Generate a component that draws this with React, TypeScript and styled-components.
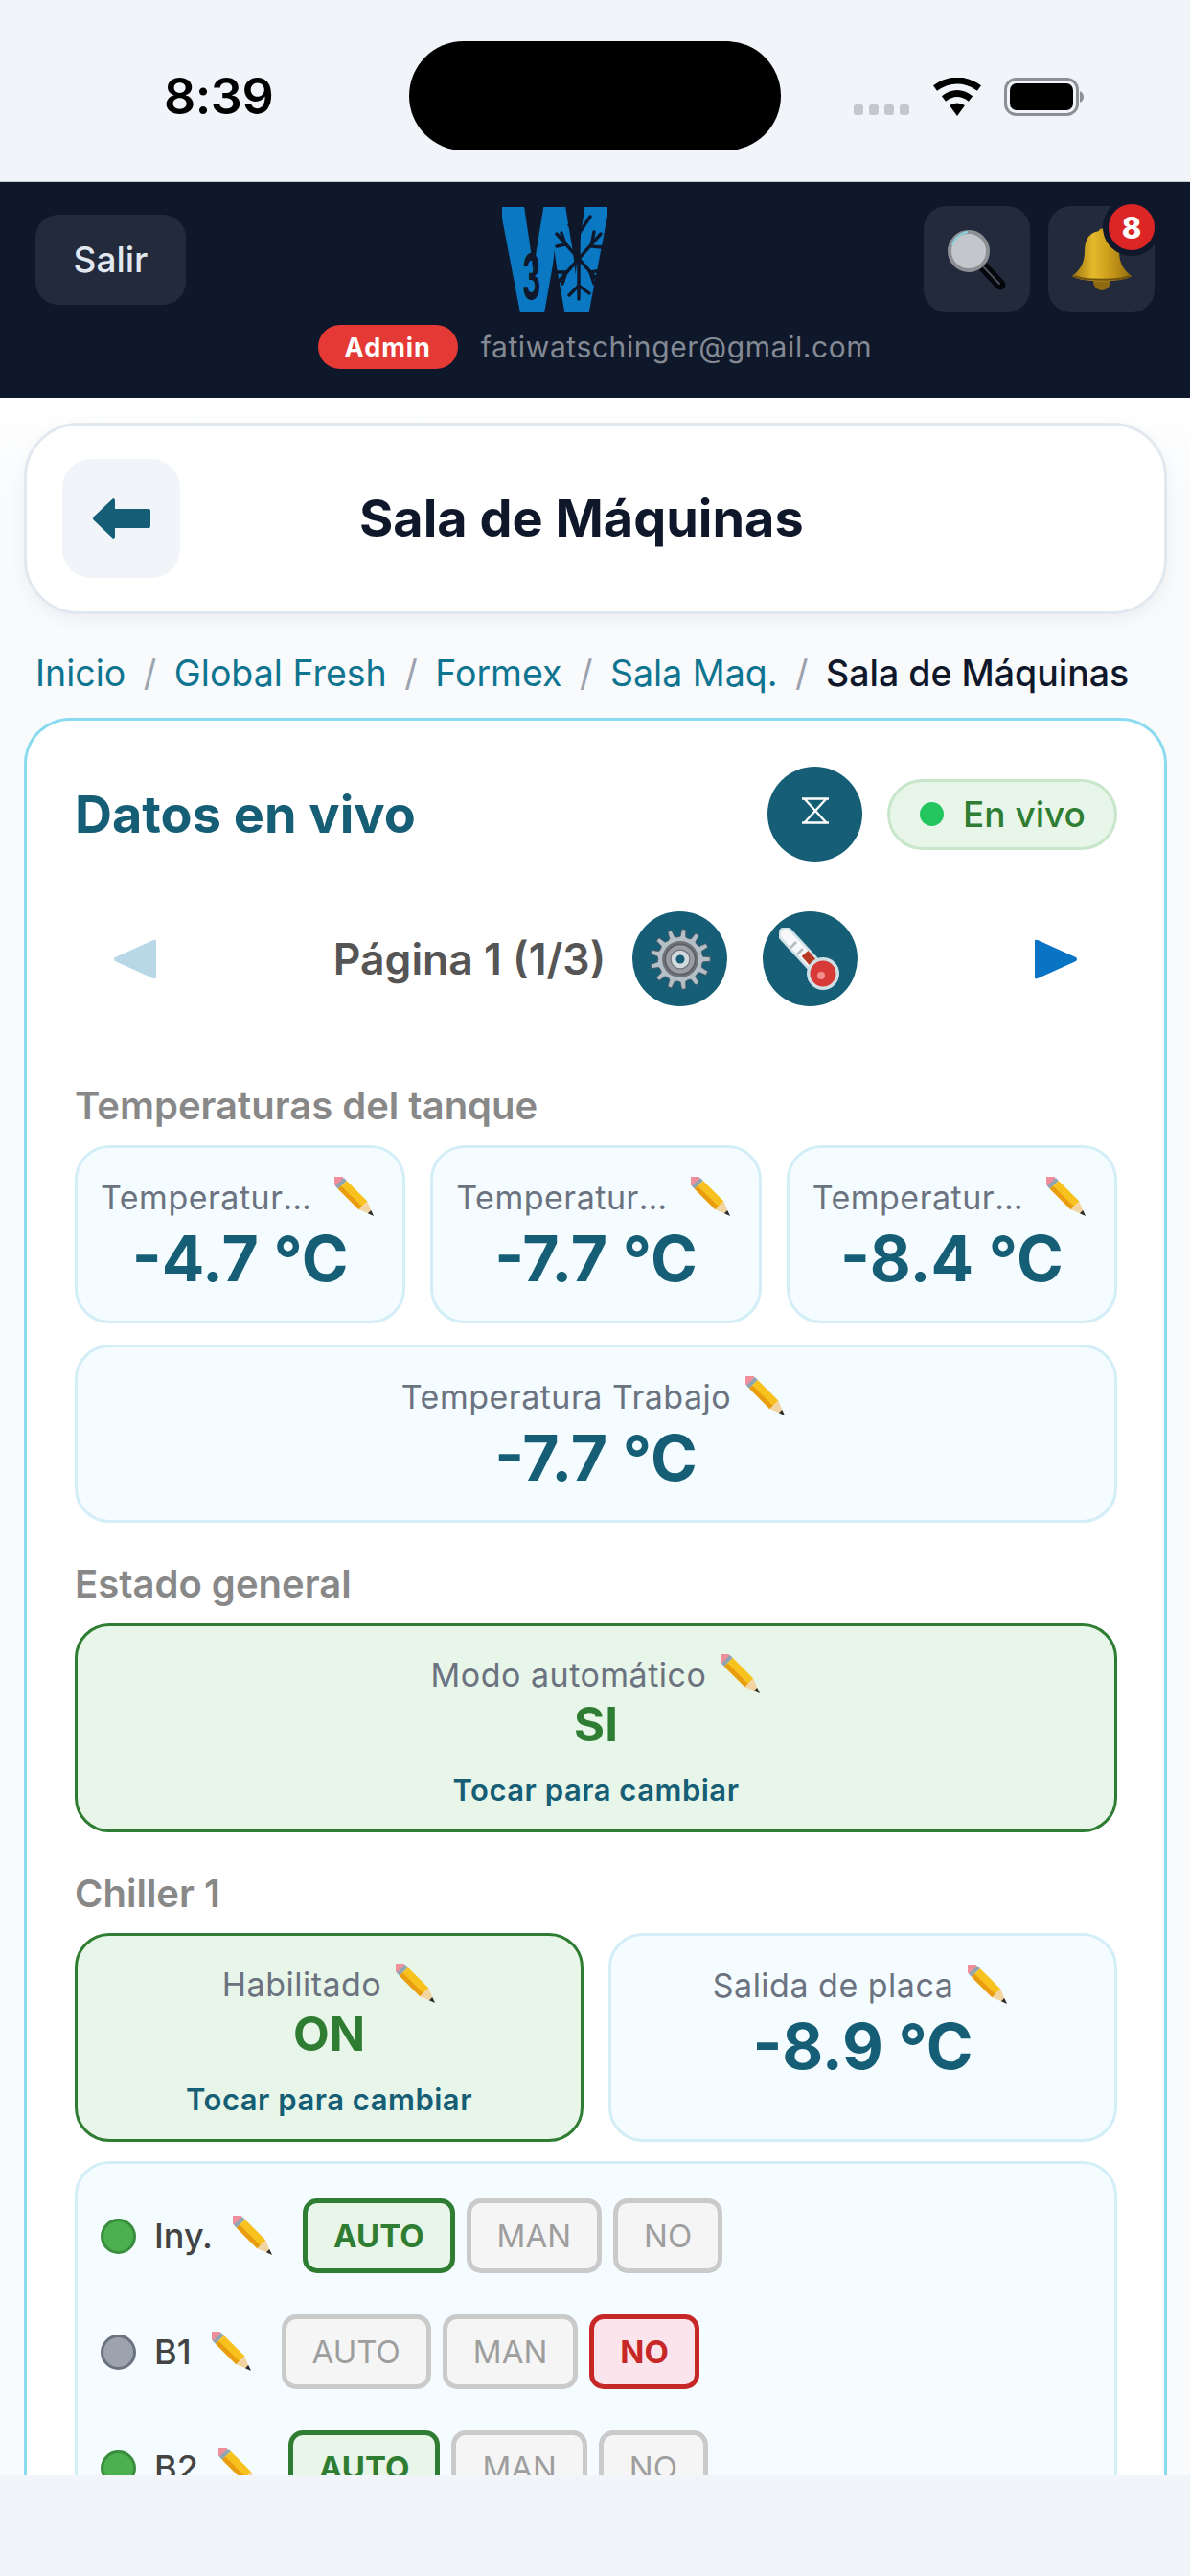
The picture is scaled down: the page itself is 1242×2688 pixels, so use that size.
import * as React from 'react';
import styled, { createGlobalStyle } from 'styled-components';

const GlobalStyles = createGlobalStyle`
  html, body {
    margin: 0;
    padding: 0;
    background: #f1f5f9;
    font-family: 'Inter', 'Liberation Sans', sans-serif;
  }

  *, *:before, *:after {
    box-sizing: border-box;
  }
`;

const TEAL = '#155e75';
const GREEN = '#2e7d32';
const RED = '#c62828';

const Screen = styled.div`
  display: flex;
  flex-direction: column;
  width: 1242px;
  height: 2688px;
  overflow: hidden;
  background: #f1f5f9;
`;

const StatusBar = styled.div`
  display: grid;
  grid-template-columns: 427px 388px 1fr;
  flex: none;
  height: 190px;
  padding-top: 43px;
  border-bottom: 1px solid #c9ccd1;
`;
const Time = styled.div`
  height: 114px;
  padding-left: 171px;
  color: #000;
  font-size: 52px;
  font-weight: 600;
  letter-spacing: -0.5px;
  line-height: 116px;
`;
const Island = styled.div`
  height: 114px;
  border-radius: 57px;
  background: #000;
`;
const StatusIcons = styled.div`
  display: flex;
  align-items: flex-end;
  height: 40px;
  margin-top: 38px;
  padding-left: 76px;
`;
const SignalDots = styled.div`
  display: flex;
  gap: 6px;
  margin: 0 24px 1px 0;
`;
const SignalDot = styled.span`
  width: 10px;
  height: 11px;
  border-radius: 3px;
  background: #c4c7cb;
`;

const Header = styled.header`
  display: flex;
  flex: none;
  flex-direction: column;
  gap: 13px;
  height: 225px;
  padding: 25px 37px 0;
  background: #0f172a;
`;
const HeaderTop = styled.div`
  display: flex;
  align-items: center;
  justify-content: space-between;
`;
const ExitButton = styled.div`
  display: flex;
  align-items: center;
  justify-content: center;
  width: 157px;
  height: 94px;
  border-radius: 24px;
  background: #222a3b;
  color: #e2e8f0;
  font-size: 37px;
  font-weight: 500;
`;
const HeaderActions = styled.div`
  display: flex;
  gap: 19px;
`;
const ActionButton = styled.div`
  position: relative;
  display: flex;
  align-items: center;
  justify-content: center;
  width: 111px;
  height: 111px;
  border-radius: 24px;
  background: #222a3b;
`;
const Badge = styled.span`
  position: absolute;
  top: -8px;
  right: -6px;
  display: flex;
  align-items: center;
  justify-content: center;
  width: 60px;
  height: 60px;
  border: 6px solid #0f172a;
  border-radius: 50%;
  background: #dc2626;
  color: #fff;
  font-size: 31px;
  font-weight: 800;
`;
const UserRow = styled.div`
  display: flex;
  align-items: center;
  justify-content: center;
  gap: 24px;
`;
const RolePill = styled.span`
  display: flex;
  align-items: center;
  justify-content: center;
  width: 146px;
  height: 46px;
  border-radius: 23px;
  background: #e53935;
  color: #fff;
  font-size: 27px;
  font-weight: 700;
  letter-spacing: 1px;
`;
const Email = styled.span`
  color: #848a94;
  font-size: 30px;
  letter-spacing: 0.6px;
`;

const Content = styled.main`
  flex: 1;
  min-height: 0;
  overflow: hidden;
  padding: 26px 24px 0 25px;
  background: linear-gradient(#ffffff, #f8fafc 120px);
`;
const TitleCard = styled.div`
  display: flex;
  align-items: center;
  height: 200px;
  padding-left: 37px;
  border: 3px solid #e2e8f0;
  border-radius: 57px;
  background: #fff;
  box-shadow: 0 6px 18px rgba(15, 23, 42, 0.05);
`;
const BackButton = styled.div`
  display: flex;
  flex: none;
  align-items: center;
  justify-content: center;
  width: 123px;
  height: 124px;
  border-radius: 30px;
  background: #f1f5f9;
`;
const PageTitle = styled.h1`
  margin: 0 0 0 187px;
  color: #0f172a;
  font-size: 54px;
  font-weight: 700;
  line-height: 64px;
`;
const Breadcrumbs = styled.nav`
  display: flex;
  align-items: center;
  gap: 18.5px;
  height: 46px;
  margin: 38px 0 0 12px;
  font-size: 37.5px;
  white-space: nowrap;
`;
const Crumb = styled.span<{ $current?: boolean }>`
  color: ${({ $current }) => ($current ? '#0f172a' : '#0e7490')};
  font-weight: ${({ $current }) => ($current ? 500 : 400)};
`;
const CrumbSeparator = styled.span`
  color: #9ca3af;
`;

const LiveCard = styled.section`
  margin-top: 24px;
  padding: 48px 49px 60px 50px;
  border: 3px solid #8adbef;
  border-bottom: 0;
  border-radius: 48px 48px 0 0;
  background: #fff;
`;
const LiveHeader = styled.div`
  display: flex;
  align-items: center;
  justify-content: space-between;
`;
const LiveTitle = styled.h2`
  margin: 0;
  color: ${TEAL};
  font-size: 54px;
  font-weight: 700;
`;
const LiveActions = styled.div`
  display: flex;
  align-items: center;
  gap: 26px;
`;
const RoundButton = styled.div`
  display: flex;
  flex: none;
  align-items: center;
  justify-content: center;
  width: 99px;
  height: 99px;
  border-radius: 50%;
  background: ${TEAL};

  & + & {
    margin-left: 9px;
  }
`;
const LivePill = styled.div`
  display: flex;
  align-items: center;
  gap: 20px;
  width: 240px;
  height: 74px;
  padding-left: 31px;
  border: 3px solid #c8e6c9;
  border-radius: 37px;
  background: #e8f5e9;
  color: ${GREEN};
  font-size: 37px;
  font-weight: 500;
`;
const LiveDot = styled.span`
  width: 25px;
  height: 25px;
  border-radius: 50%;
  background: #22c55e;
`;
const PagerRow = styled.div`
  display: flex;
  align-items: center;
  justify-content: space-between;
  margin-top: 52px;
  padding: 0 42px 0 41px;
`;
const PagerCenter = styled.div`
  display: flex;
  align-items: center;
  gap: 28px;
`;
const PagerLabel = styled.span`
  color: #555;
  font-size: 44.5px;
  font-weight: 600;
`;

const Section = styled.div<{ $first?: boolean }>`
  margin-top: ${({ $first }) => ($first ? 80 : 40)}px;
`;
const SectionTitle = styled.h3`
  margin: 0 0 18px;
  color: #888;
  font-size: 40px;
  font-weight: 600;
  line-height: 47px;
`;
const TripleGrid = styled.div`
  display: grid;
  grid-template-columns: repeat(3, 1fr);
  gap: 22px 26px;
`;
const DoubleGrid = styled.div`
  display: grid;
  grid-template-columns: repeat(2, 1fr);
  gap: 26px;
`;
const Card = styled.div<{ $wide?: boolean; $on?: boolean }>`
  grid-column: ${({ $wide }) => ($wide ? '1 / -1' : 'auto')};
  min-width: 0;
  padding: ${({ $on }) => ($on ? '30px 24px 21px' : '31px 29px 25px 24px')};
  border: 3px solid ${({ $on }) => ($on ? GREEN : '#d3eef6')};
  border-radius: 36px;
  background: ${({ $on }) => ($on ? '#e8f5e9' : '#f4fcff')};
`;
const LabelRow = styled.div`
  display: flex;
  align-items: center;
  justify-content: center;
  gap: 15px;
  height: 40px;
`;
const Label = styled.span`
  overflow: hidden;
  min-width: 0;
  color: #6b7280;
  font-size: 34px;
  letter-spacing: 0.5px;
  text-overflow: ellipsis;
  white-space: nowrap;
`;
const Value = styled.div`
  margin-top: 4px;
  margin-right: -5px;
  color: ${TEAL};
  font-size: 66px;
  font-weight: 700;
  line-height: 80px;
  text-align: center;
  white-space: nowrap;
`;
const StateValue = styled.div`
  margin-top: 3px;
  color: ${GREEN};
  font-size: 49px;
  font-weight: 700;
  line-height: 60px;
  text-align: center;
`;
const TapHint = styled.div`
  margin-top: 18px;
  color: ${TEAL};
  font-size: 31px;
  font-weight: 600;
  letter-spacing: 0.5px;
  line-height: 40px;
  text-align: center;
`;
const DevicesCard = styled.div`
  display: flex;
  flex-direction: column;
  gap: 43px;
  margin-top: 20px;
  padding: 36px 24px 36px;
  border: 3px solid #d3eef6;
  border-radius: 36px;
  background: #f4fcff;
`;
const DeviceRow = styled.div`
  display: flex;
  align-items: center;
  height: 78px;
`;
const DeviceDot = styled.span<{ $active: boolean }>`
  flex: none;
  width: 37px;
  height: 37px;
  border: 3px solid ${({ $active }) => ($active ? '#388e3c' : '#6b7280')};
  border-radius: 50%;
  background: ${({ $active }) => ($active ? '#4caf50' : '#9ca3af')};
`;
const DeviceName = styled.span`
  margin: 0 21px 0 19px;
  color: #444;
  font-size: 36px;
  font-weight: 500;
`;
const ModeGroup = styled.div`
  display: flex;
  gap: 12px;
  margin-left: 31px;
`;
const ModeButton = styled.div<{ $tone?: 'green' | 'red' }>`
  display: flex;
  align-items: center;
  justify-content: center;
  height: 78px;
  padding: 0 27px;
  border: 5px solid ${({ $tone }) => ($tone === 'green' ? GREEN : $tone === 'red' ? RED : '#cacaca')};
  border-radius: 15px;
  background: ${({ $tone }) => ($tone === 'green' ? '#e8f5e9' : $tone === 'red' ? '#fce4ec' : '#f5f5f5')};
  color: ${({ $tone }) => ($tone === 'green' ? GREEN : $tone === 'red' ? RED : '#9e9e9e')};
  font-size: 33px;
  font-weight: ${({ $tone }) => ($tone ? 700 : 400)};
`;
const BottomBar = styled.div`
  flex: none;
  height: 105px;
  background: #f1f5f9;
`;

const gearPoints = (() => {
  const pts: string[] = [];
  const teeth = 13;
  for (let i = 0; i < teeth; i++) {
    const a = (i / teeth) * Math.PI * 2;
    const w = (Math.PI * 2) / teeth;
    [
      [a - w * 0.5, 28],
      [a - w * 0.24, 29],
      [a - w * 0.14, 38],
      [a + w * 0.14, 38],
      [a + w * 0.24, 29],
    ].forEach(([t, r]) => pts.push(`${(40 + r * Math.cos(t)).toFixed(1)},${(40 + r * Math.sin(t)).toFixed(1)}`));
  }
  return pts.join(' ');
})();

const Wifi = () => (
  <svg width="52" height="40" viewBox="0 0 52 40" style={{ marginRight: 23 }}>
    <path d="M26 40 L18 29 Q26 24 34 29 Z" fill="#000" />
    <path d="M12 22 Q26 11 40 22" stroke="#000" strokeWidth="7" fill="none" />
    <path d="M3 11 Q26 -5 49 11" stroke="#000" strokeWidth="7" fill="none" />
  </svg>
);

const Battery = () => (
  <svg width="83" height="40" viewBox="0 0 83 40">
    <rect x="1.5" y="1.5" width="75" height="37" rx="11" fill="none" stroke="#8e8e93" strokeWidth="3" />
    <rect x="6" y="6" width="66" height="28" rx="7" fill="#000" />
    <path d="M79 14 Q83 16 83 20 Q83 24 79 26 Z" fill="#8e8e93" />
  </svg>
);

// logo: heavy W with a snowflake and a small 3 over it
const Logo = () => (
  <svg width="110" height="110" viewBox="0 0 110 110">
    <text
      x="0"
      y="0"
      transform="translate(-4 109) scale(0.92 1.27)"
      fontFamily="Inter, sans-serif"
      fontSize="118"
      fontWeight="900"
      stroke="#0a78c2"
      strokeWidth="1.5"
      fill="#0a78c2"
    >
      W
    </text>
    <text
      x="0"
      y="0"
      transform="translate(21 96) scale(0.6 1.3)"
      fontFamily="Inter, sans-serif"
      fontSize="50"
      fontWeight="700"
      fill="#0f172a"
    >
      3
    </text>
    <g stroke="#0f172a" strokeWidth="3.4" fill="none" strokeLinecap="round">
      <path d="M80 16 V96 M57 28 L103 80 M103 28 L57 80" />
      <path d="M70 19 L80 28 L92 10 M70 92 L80 82 L91 90" />
      <path d="M57 41 L66 39 L62 27 M96 26 L93 41 L105 42" />
      <path d="M56 68 L67 68 L63 80 M104 66 L92 68 L96 80" />
    </g>
  </svg>
);

const Magnifier = () => (
  <svg width="64" height="64" viewBox="0 0 64 64">
    <path d="M37 38 L56 58" stroke="#05070c" strokeWidth="11" strokeLinecap="round" />
    <path d="M38 39 L55 57" stroke="#4a4e57" strokeWidth="2" strokeLinecap="round" />
    <circle cx="23" cy="23" r="20" fill="#c3c6ca" stroke="#8c9095" strokeWidth="4" />
    <path d="M6 17 A19 19 0 0 1 22 3" stroke="#8fd0df" strokeWidth="2" fill="none" />
  </svg>
);

const Bell = () => (
  <svg width="66" height="66" viewBox="0 0 66 66">
    <defs>
      <linearGradient id="bellGold" x1="0" x2="1" y1="0" y2="0">
        <stop offset="0" stopColor="#9c7410" />
        <stop offset="0.35" stopColor="#e5b92c" />
        <stop offset="0.65" stopColor="#c99a1a" />
        <stop offset="1" stopColor="#8f6a0c" />
      </linearGradient>
    </defs>
    <circle cx="33" cy="4" r="3.5" fill="#c4951a" />
    <ellipse cx="33" cy="56" rx="9" ry="9" fill="#8f6a12" />
    <path
      d="M33 3 C21 3 15 11 15 24 C15 37 10 44 2 50 C10 57 56 57 64 50 C56 44 51 37 51 24 C51 11 45 3 33 3 Z"
      fill="url(#bellGold)"
    />
    <path d="M4 50 C14 55 52 55 62 50" stroke="#6f530f" strokeWidth="2" fill="none" />
  </svg>
);

const BackArrow = () => (
  <svg width="60" height="42" viewBox="0 0 60 42">
    <path d="M21 0 Q23 0 23 3 V11 H58 Q60 11 60 13 V29 Q60 31 58 31 H23 V39 Q23 42 21 42 L1 23 Q-1 21 1 19 Z" fill={TEAL} />
  </svg>
);

const Hourglass = () => (
  <svg width="30" height="28" viewBox="0 0 30 28" style={{ marginBottom: 8 }}>
    <path d="M1 1.5 H29 M1 26.5 H29 M4 2 L26 26 M26 2 L4 26" stroke="#fff" strokeWidth="2.4" fill="none" />
  </svg>
);

const Triangle = ({ dir, color }: { dir: 'left' | 'right'; color: string }) => (
  <svg width="44" height="42" viewBox="0 0 44 42">
    <path
      d={dir === 'left' ? 'M44 2 V40 Q44 42 41 41 L1 23 Q-1 21 1 19 L41 1 Q44 0 44 2 Z' : 'M0 2 V40 Q0 42 3 41 L43 23 Q45 21 43 19 L3 1 Q0 0 0 2 Z'}
      fill={color}
    />
  </svg>
);

const Gear = () => (
  <svg width="66" height="66" viewBox="0 0 80 80">
    <polygon points={gearPoints} fill="#b4bfc7" stroke="#4f555c" strokeWidth="1" />
    <circle cx="40" cy="40" r="23" fill="#6f7378" />
    <circle cx="40" cy="40" r="19" fill="#9a9da2" stroke="#5c6066" strokeWidth="2" />
    <circle cx="40" cy="40" r="12" fill="#d3dade" stroke="#70757a" strokeWidth="1.5" />
    <circle cx="40" cy="40" r="5.5" fill={TEAL} />
  </svg>
);

const Thermometer = () => (
  <svg width="66" height="66" viewBox="0 0 66 66">
    <path d="M7 7 L42 45" stroke="#cfe0e6" strokeWidth="16" strokeLinecap="round" />
    <path d="M7 7 L42 45" stroke="#f6f8f9" strokeWidth="11" strokeLinecap="round" />
    <path d="M12 21 L18 15 M19 28 L25 22" stroke="#b4bcc0" strokeWidth="2.5" />
    <path d="M27 27 L44 46" stroke="#b83a22" strokeWidth="9" />
    <circle cx="46" cy="48" r="17" fill="#cfe0e6" />
    <circle cx="46" cy="48" r="13.5" fill="#d83a38" />
    <circle cx="44" cy="50" r="4" fill="#f28f8f" />
  </svg>
);

const Pencil = () => (
  <svg width="42" height="42" viewBox="0 0 40 40" style={{ flex: 'none' }}>
    <g transform="rotate(45 20 20)">
      <rect x="-9" y="14" width="9" height="12" rx="3.5" fill="#ef8f9c" />
      <rect x="-1" y="14" width="4" height="12" fill="#8fa6b2" />
      <rect x="3" y="14" width="29" height="12" fill="#f7c21e" />
      <rect x="3" y="21.5" width="29" height="4.5" fill="#ea9c10" />
      <path d="M32 14 L46 20 L32 26 Z" fill="#f2d3a2" />
      <path d="M41 17.8 L47 20 L41 22.2 Z" fill="#2b2b2b" />
    </g>
  </svg>
);

type Mode = 'AUTO' | 'MAN' | 'NO';
const MODE_LIST: Mode[] = ['AUTO', 'MAN', 'NO'];

const DEVICES: { name: string; selected: Mode; active: boolean }[] = [
  { name: 'Iny.', selected: 'AUTO', active: true },
  { name: 'B1', selected: 'NO', active: false },
  { name: 'B2', selected: 'AUTO', active: true },
];

const LabelLine = ({ text }: { text: string }) => (
  <LabelRow>
    <Label>{text}</Label>
    <Pencil />
  </LabelRow>
);

const toneFor = (mode: Mode, selected: Mode): 'green' | 'red' | undefined => {
  if (mode !== selected) return undefined;
  return mode === 'NO' ? 'red' : 'green';
};

export default function App() {
  return (
    <React.Fragment>
      <GlobalStyles />
      <Screen>
        <StatusBar>
          <Time>8:39</Time>
          <Island />
          <StatusIcons>
            <SignalDots>
              <SignalDot />
              <SignalDot />
              <SignalDot />
              <SignalDot />
            </SignalDots>
            <Wifi />
            <Battery />
          </StatusIcons>
        </StatusBar>

        <Header>
          <HeaderTop>
            <ExitButton>Salir</ExitButton>
            <Logo />
            <HeaderActions>
              <ActionButton>
                <Magnifier />
              </ActionButton>
              <ActionButton>
                <Bell />
                <Badge>8</Badge>
              </ActionButton>
            </HeaderActions>
          </HeaderTop>
          <UserRow>
            <RolePill>Admin</RolePill>
            <Email>fatiwatschinger@gmail.com</Email>
          </UserRow>
        </Header>

        <Content>
          <TitleCard>
            <BackButton>
              <BackArrow />
            </BackButton>
            <PageTitle>Sala de Máquinas</PageTitle>
          </TitleCard>

          <Breadcrumbs>
            <Crumb>Inicio</Crumb>
            <CrumbSeparator>/</CrumbSeparator>
            <Crumb>Global Fresh</Crumb>
            <CrumbSeparator>/</CrumbSeparator>
            <Crumb>Formex</Crumb>
            <CrumbSeparator>/</CrumbSeparator>
            <Crumb>Sala Maq.</Crumb>
            <CrumbSeparator>/</CrumbSeparator>
            <Crumb $current>Sala de Máquinas</Crumb>
          </Breadcrumbs>

          <LiveCard>
            <LiveHeader>
              <LiveTitle>Datos en vivo</LiveTitle>
              <LiveActions>
                <RoundButton>
                  <Hourglass />
                </RoundButton>
                <LivePill>
                  <LiveDot />
                  En vivo
                </LivePill>
              </LiveActions>
            </LiveHeader>

            <PagerRow>
              <Triangle dir="left" color="#b8d8e8" />
              <PagerCenter>
                <PagerLabel>Página 1 (1/3)</PagerLabel>
                <RoundButton>
                  <Gear />
                </RoundButton>
                <RoundButton>
                  <Thermometer />
                </RoundButton>
              </PagerCenter>
              <Triangle dir="right" color="#0a74c4" />
            </PagerRow>

            <Section $first>
              <SectionTitle>Temperaturas del tanque</SectionTitle>
              <TripleGrid>
                <Card>
                  <LabelLine text="Temperatura Entrada" />
                  <Value>-4.7 °C</Value>
                </Card>
                <Card>
                  <LabelLine text="Temperatura Medio" />
                  <Value>-7.7 °C</Value>
                </Card>
                <Card>
                  <LabelLine text="Temperatura Salida" />
                  <Value>-8.4 °C</Value>
                </Card>
                <Card $wide>
                  <LabelLine text="Temperatura Trabajo" />
                  <Value>-7.7 °C</Value>
                </Card>
              </TripleGrid>
            </Section>

            <Section>
              <SectionTitle>Estado general</SectionTitle>
              <Card $on>
                <LabelLine text="Modo automático" />
                <StateValue>SI</StateValue>
                <TapHint>Tocar para cambiar</TapHint>
              </Card>
            </Section>

            <Section>
              <SectionTitle>Chiller 1</SectionTitle>
              <DoubleGrid>
                <Card $on>
                  <LabelLine text="Habilitado" />
                  <StateValue>ON</StateValue>
                  <TapHint>Tocar para cambiar</TapHint>
                </Card>
                <Card>
                  <LabelLine text="Salida de placa" />
                  <Value>-8.9 °C</Value>
                </Card>
              </DoubleGrid>
              <DevicesCard>
                {DEVICES.map(device => (
                  <DeviceRow key={device.name}>
                    <DeviceDot $active={device.active} />
                    <DeviceName>{device.name}</DeviceName>
                    <Pencil />
                    <ModeGroup>
                      {MODE_LIST.map(mode => (
                        <ModeButton key={mode} $tone={toneFor(mode, device.selected)}>
                          {mode}
                        </ModeButton>
                      ))}
                    </ModeGroup>
                  </DeviceRow>
                ))}
              </DevicesCard>
            </Section>
          </LiveCard>
        </Content>
        <BottomBar />
      </Screen>
    </React.Fragment>
  );
}
